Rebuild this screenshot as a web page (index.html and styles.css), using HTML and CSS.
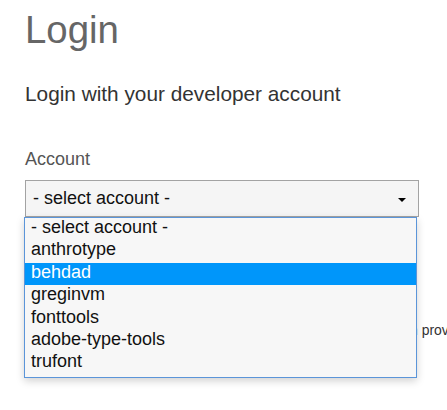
FILE: index.html
```html
<!DOCTYPE html>
<html>

<head>
    <meta charset="UTF-8">
    <title>Login</title>
    <link rel="stylesheet" href="styles.css">
</head>

<body>
    <div class="login-page">
        <h1 class="title">Login</h1>
        <p class="subtitle">Login with your developer account</p>

        <label class="field-label" for="account">Account</label>
        <div class="account-field">
            <div class="select-box" id="account">
                <span>- select account -</span>
                <span class="caret"></span>
            </div>
            <ul class="options">
                <li>- select account -</li>
                <li>anthrotype</li>
                <li class="active">behdad</li>
                <li>greginvm</li>
                <li>fonttools</li>
                <li>adobe-type-tools</li>
                <li>trufont</li>
            </ul>
        </div>

        <p class="note">If the account you need is not shown, please sign in with a login provider.</p>
    </div>
</body>

</html>
```

FILE: styles.css
```css
html {
    height: 100%;
    overflow: hidden;
}

body {
    margin: 0;
    padding: 0;
    height: 100%;
    font-family: "Liberation Sans", Arial, sans-serif;
    color: #333;
    background: #fff;
}

.login-page {
    padding: 8px 25px 0;
}

.title {
    margin: 0;
    font-size: 38.4px;
    font-weight: normal;
    color: #666;
}

.subtitle {
    margin: 30px 0 0;
    font-size: 20.8px;
    color: #333;
}

.field-label {
    display: block;
    margin-top: 43px;
    font-size: 18px;
    color: #555;
}

.account-field {
    position: relative;
    margin-top: 10px;
    width: 394px;
}

.select-box {
    display: flex;
    align-items: center;
    justify-content: space-between;
    box-sizing: border-box;
    height: 37px;
    padding: 0 12px 0 7px;
    border: 1px solid #a3a3a3;
    background: #f5f5f5;
    color: #111;
    font-size: 18px;
}

.caret {
    width: 0;
    height: 0;
    border-left: 4px solid transparent;
    border-right: 4px solid transparent;
    border-top: 4px solid #000;
    margin-top: 2px;
}

.options {
    position: absolute;
    z-index: 2;
    top: 37px;
    left: -1px;
    width: 393px;
    box-sizing: border-box;
    margin: 0;
    padding: 0 0 2px;
    list-style: none;
    border: 1px solid #5b95d9;
    background: #f7f7f7;
    box-shadow: 0 3px 8px rgba(0, 0, 0, 0.18);
    font-size: 18px;
    color: #111;
}

.options li {
    line-height: 19px;
    padding: 0 6px 3.4px;
}

.options li.active {
    background: #0096fa;
    color: #fff;
}

.note {
    margin: 105px 0 0;
    font-size: 13.95px;
    color: #333;
    white-space: nowrap;
}
```
